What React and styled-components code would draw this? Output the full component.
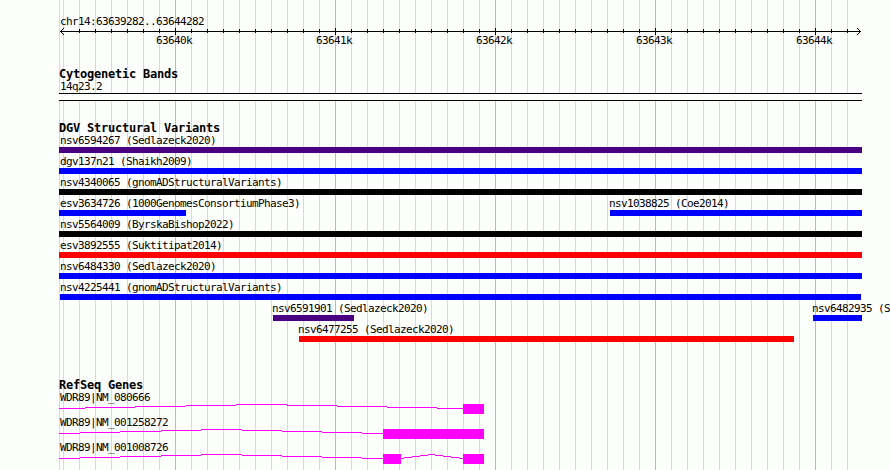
import React from 'react'
import styled, { createGlobalStyle } from 'styled-components'

const GlobalStyle = createGlobalStyle`
body {
margin: 0;
background: #fdfffc;
overflow: hidden;
}
`

const minor = '#b3e9e7'
const major = '#8cc9e6'

const Browser = styled.main`
box-sizing: border-box;
width: 890px;
height: 470px;
padding: 15px 0 0 59px;
overflow: hidden;
font-family: "DejaVu Sans Mono", "Liberation Mono", monospace;
color: #000;
background-color: #fdfffc;
background-image:
  repeating-linear-gradient(to right, ${major} 0 1px, transparent 1px 160px),
  repeating-linear-gradient(to right, ${minor} 0 1px, transparent 1px 16px),
  linear-gradient(${minor}, ${minor});
background-size: 641px 100%, 785px 100%, 1px 100%;
background-position: 175px 0, 63px 0, 59px 0;
background-repeat: no-repeat;
`

const Label = styled.div`
height: 12px;
padding-left: 1px;
font-size: 11px;
line-height: 14px;
letter-spacing: -0.622px;
white-space: pre;
`

const Title = styled.h2`
margin: 0;
height: 12px;
font-size: 12px;
font-weight: 700;
line-height: 12px;
letter-spacing: -0.225px;
white-space: pre;
`

const Ruler = styled.svg`
display: block;
width: 803px;
height: 7px;
margin-top: 1px;
`

const Scale = styled.div`
display: grid;
grid-template-columns: repeat(5, 160px);
padding-left: 96px;
`

const Mark = styled(Label)`
line-height: 12px;
`

const Track = styled.section`
margin-top: ${props => props.$gap}px;
`

const Band = styled.div`
box-sizing: border-box;
width: 803px;
height: 8px;
margin-top: 1px;
border: solid #000;
border-width: 1px 0;
background: #fdfffc;
`

const Row = styled.div`
display: flex;
height: 21px;
`

const Variant = styled.div`
flex: none;
width: ${props => props.$width}px;
margin-left: ${props => props.$gap || 0}px;
`

const VariantName = styled(Label)`
margin-left: ${props => props.$shift || 0}px;
`

const Bar = styled.div`
height: 6px;
margin-top: 1px;
background: ${props => props.$color};
`

const Gene = styled.div`
height: 25px;
`

const GeneShape = styled.svg`
display: block;
width: 803px;
height: 10px;
margin-top: 1px;
`

const purple = '#4b0082'
const blue = '#0000ff'
const black = '#000000'
const red = '#ff0000'

const variants = [
  [{ name: 'nsv6594267 (Sedlazeck2020)', width: 803, color: purple }],
  [{ name: 'dgv137n21 (Shaikh2009)', width: 803, color: blue }],
  [{ name: 'nsv4340065 (gnomADStructuralVariants)', width: 803, color: black }],
  [
    { name: 'esv3634726 (1000GenomesConsortiumPhase3)', width: 127, color: blue },
    { name: 'nsv1038825 (Coe2014)', gap: 424, width: 252, color: blue, shift: -2 },
  ],
  [{ name: 'nsv5564009 (ByrskaBishop2022)', width: 803, color: black }],
  [{ name: 'esv3892555 (Suktitipat2014)', width: 803, color: red }],
  [{ name: 'nsv6484330 (Sedlazeck2020)', width: 803, color: blue }],
  [{ name: 'nsv4225441 (gnomADStructuralVariants)', gap: 1, width: 801, color: blue, shift: -1 }],
  [
    { name: 'nsv6591901 (Sedlazeck2020)', gap: 214, width: 81, color: purple, shift: -2 },
    { name: 'nsv6482935 (Sedlazeck2020)', gap: 459, width: 49, color: blue, shift: -2 },
  ],
  [{ name: 'nsv6477255 (Sedlazeck2020)', gap: 240, width: 495, color: red, shift: -2 }],
]

// introns are stepped: [start x, y] of every step, closed by the end x
const longIntron = [[0, 4], [21, 3], [61, 2], [102, 1], [142, 0], [183, 1], [223, 2], [263, 3], [303, 4], [324]]

const genes = [
  {
    name: 'WDR89|NM_080666',
    introns: [[[0, 4], [26, 3], [76, 2], [127, 1], [177, 0], [228, 1], [278, 2], [328, 3], [378, 4], [404]]],
    exons: [[404, 21]],
  },
  {
    name: 'WDR89|NM_001258272',
    introns: [longIntron],
    exons: [[324, 101]],
  },
  {
    name: 'WDR89|NM_001008726',
    introns: [
      longIntron,
      [[342, 4], [345, 3], [353, 2], [361, 1], [369, 0], [376, 1], [384, 2], [392, 3], [400, 4], [404]],
    ],
    exons: [[324, 18], [404, 21]],
  },
]

const ticks = Array.from({ length: 49 }, (_, i) => 20 + i * 16)

function intronPath(steps) {
  return steps.slice(0, -1).map(([x, y], i) => `M${x} ${y + 0.5}H${steps[i + 1][0]}`).join('')
}

function Axis() {
  return (
    <>
      <Ruler viewBox="0 0 803 7" shapeRendering="crispEdges">
        <path d="M1 3h801v1H1z" />
        <path d="M2 2h1v1h-1zM3 1h1v1h-1zM4 0h1v1h-1zM2 4h1v1h-1zM3 5h1v1h-1zM4 6h1v1h-1z" />
        <path d="M800 2h1v1h-1zM799 1h1v1h-1zM798 0h1v1h-1zM800 4h1v1h-1zM799 5h1v1h-1zM798 6h1v1h-1z" />
        {ticks.map(x => (
          (x - 116) % 160 === 0
            ? <rect key={x} x={x} y="0" width="1" height="7" />
            : <rect key={x} x={x} y="1" width="1" height="4" />
        ))}
      </Ruler>
      <Scale>
        {['63640k', '63641k', '63642k', '63643k', '63644k'].map(mark => (
          <Mark key={mark}>{mark}</Mark>
        ))}
      </Scale>
    </>
  )
}

function App() {
  return (
    <>
      <GlobalStyle />
      <Browser>
        <Label>chr14:63639282..63644282</Label>
        <Axis />

        <Track $gap={21}>
          <Title>Cytogenetic Bands</Title>
          <Label>14q23.2</Label>
          <Band />
        </Track>

        <Track $gap={21}>
          <Title>DGV Structural Variants</Title>
          {variants.map((row, i) => (
            <Row key={i}>
              {row.map(v => (
                <Variant key={v.name} $gap={v.gap} $width={v.width}>
                  <VariantName $shift={v.shift}>{v.name}</VariantName>
                  <Bar $color={v.color} />
                </Variant>
              ))}
            </Row>
          ))}
        </Track>

        <Track $gap={35}>
          <Title>RefSeq Genes</Title>
          {genes.map(gene => (
            <Gene key={gene.name}>
              <Label>{gene.name}</Label>
              <GeneShape viewBox="0 0 803 10" shapeRendering="crispEdges">
                {gene.introns.map((steps, i) => (
                  <path key={i} d={intronPath(steps)} stroke="#ff00ff" fill="none" />
                ))}
                {gene.exons.map(([x, width]) => (
                  <rect key={x} x={x} y="0" width={width} height="10" fill="#ff00ff" />
                ))}
              </GeneShape>
            </Gene>
          ))}
        </Track>
      </Browser>
    </>
  )
}

export default App
